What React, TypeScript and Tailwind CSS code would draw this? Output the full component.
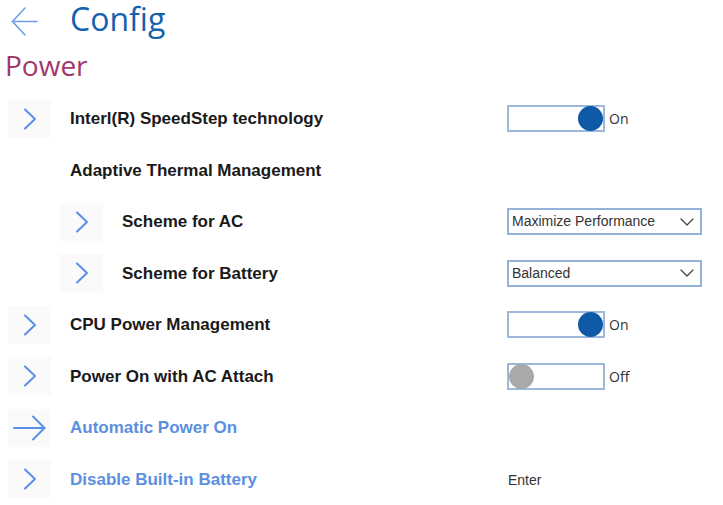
import React from "react";

function Chevron() {
  return (
    <svg width="14" height="22" viewBox="0 0 14 22" fill="none" stroke="#5a8fe8" strokeWidth="2" strokeLinecap="round" strokeLinejoin="round">
      <polyline points="2,1.5 12,11 2,20.5" />
    </svg>
  );
}

function ArrowRight() {
  return (
    <svg width="33" height="26" viewBox="0 0 33 26" fill="none" stroke="#5a8fe8" strokeWidth="2" strokeLinecap="round" strokeLinejoin="round">
      <line x1="1" y1="13" x2="31.5" y2="13" />
      <polyline points="20,1.5 31.5,13 20,24.5" />
    </svg>
  );
}

function Toggle({ on }: { on: boolean }) {
  return (
    <div className="flex items-center gap-[4px]">
      <div className={`w-[98px] h-[27px] border-2 border-[#9bb8da] flex items-center ${on ? "justify-end" : "justify-start"}`}>
        <div className={`w-[25px] h-[25px] -my-[2px] rounded-full ${on ? "bg-[#0f5aa7]" : "bg-[#a9a9a9]"}`} />
      </div>
      <span className="text-[14px] text-[#333] font-['Open_Sans',sans-serif]">{on ? "On" : "Off"}</span>
    </div>
  );
}

function Select({ value }: { value: string }) {
  return (
    <div className="w-[195px] h-[27px] border-2 border-[#93b3d8] flex items-center justify-between pl-[3px] pr-[6px]">
      <span className="text-[14px] text-[#333] font-['Liberation_Sans',Arial,sans-serif]">{value}</span>
      <svg width="14" height="8" viewBox="0 0 14 8" fill="none" stroke="#444" strokeWidth="1.3" strokeLinecap="round" strokeLinejoin="round">
        <polyline points="1,1 7,7 13,1" />
      </svg>
    </div>
  );
}

type RowProps = {
  level?: 1 | 2;
  icon?: "chevron" | "arrow" | "none";
  label: string;
  link?: boolean;
  children?: React.ReactNode;
};

function Row({ level = 1, icon = "chevron", label, link, children }: RowProps) {
  return (
    <div className="h-[51.5px] flex items-center">
      <div className={`${level === 2 ? "w-[122px] pl-[60px]" : "w-[70px] pl-[8px]"} shrink-0`}>
        {icon !== "none" && (
          <div className="w-[43px] h-[38px] bg-[#fafafb] flex items-center justify-center">
            {icon === "chevron" ? <Chevron /> : <ArrowRight />}
          </div>
        )}
      </div>
      <div
        className={`${level === 2 ? "w-[385px]" : "w-[437px]"} shrink-0 text-[17px] font-bold font-['Liberation_Sans',Arial,sans-serif] ${
          link ? "text-[#5b8fe0]" : "text-[#1a1a1a]"
        }`}
      >
        {label}
      </div>
      <div>{children}</div>
    </div>
  );
}

export default function App() {
  return (
    <div className="w-[723px] h-[505px] bg-white overflow-hidden">
      {/* Header */}
      <div className="h-[42px] flex items-center">
        <div className="w-[70px] pl-[11px]">
          <svg width="27" height="31" viewBox="0 0 27 31" fill="none" stroke="#6e9de8" strokeWidth="1.6" strokeLinecap="round" strokeLinejoin="round">
            <line x1="1.5" y1="15.5" x2="26" y2="15.5" />
            <polyline points="14,2 1.5,15.5 14,29" />
          </svg>
        </div>
        <h1 className="text-[32px] leading-none text-[#1462ad] font-['Open_Sans',sans-serif] -mt-[4px]">Config</h1>
      </div>
      <h2 className="h-[51px] pl-[5px] text-[28px] leading-[46px] text-[#a1386b] font-['Open_Sans',sans-serif]">Power</h2>

      {/* Settings */}
      <div>
        <Row label="Interl(R) SpeedStep technology">
          <Toggle on />
        </Row>
        <Row icon="none" label="Adaptive Thermal Management" />
        <Row level={2} label="Scheme for AC">
          <Select value="Maximize Performance" />
        </Row>
        <Row level={2} label="Scheme for Battery">
          <Select value="Balanced" />
        </Row>
        <Row label="CPU Power Management">
          <Toggle on />
        </Row>
        <Row label="Power On with AC Attach">
          <Toggle on={false} />
        </Row>
        <Row icon="arrow" label="Automatic Power On" link />
        <Row label="Disable Built-in Battery" link>
          <span className="pl-[1px] text-[14px] text-[#333] font-['Liberation_Sans',Arial,sans-serif]">Enter</span>
        </Row>
      </div>
    </div>
  );
}
